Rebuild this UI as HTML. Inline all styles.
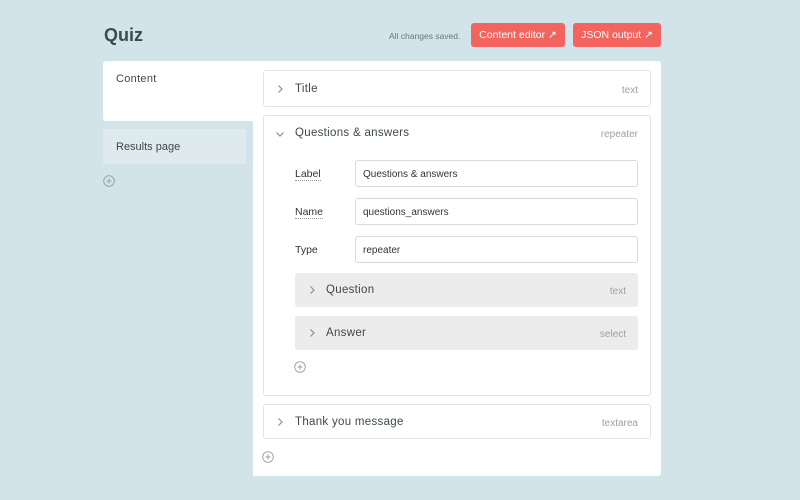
<!DOCTYPE html>
<html><head><style>
*{box-sizing:border-box;margin:0;padding:0}
body{width:800px;height:500px;background:#d2e3e9;font-family:"Liberation Sans",sans-serif;position:relative;overflow:hidden;color:#3a4548}
.a{position:absolute}
h1{position:absolute;left:104px;top:25px;font-size:18px;font-weight:bold;color:#3d4a4f}
.saved{left:389px;top:31px;font-size:8.5px;color:#6c7679}
.btn{top:23px;height:24px;background:#f4645e;color:#fff;font-size:10.5px;border-radius:3px;line-height:24px;text-align:center}
.panel{left:253px;top:61px;width:408px;height:415px;background:#fff;border-radius:0 3px 3px 0}
.card{border:1px solid #e1e4e5;border-radius:3px;background:#fff}
.hd{font-size:11.5px;color:#3d484c;letter-spacing:.3px}
.ty{font-size:10px;color:#9aa0a2;text-align:right}
.chev{width:8px;height:10px}
.lbl{font-size:10.5px;color:#333}
.inp{border:1px solid #d7dadb;border-radius:3px;height:27px;font-size:10px;line-height:27px;padding-left:7px;color:#333}
.sub{background:#ececec;border-radius:3px}
.plus{width:12px;height:12px}
</style></head><body>
<svg width="0" height="0" style="position:absolute"><defs>
<symbol id="r" viewBox="0 0 8 10"><path d="M2.5 1.5L6 5L2.5 8.5" fill="none" stroke="#8a8f91" stroke-width="1.2"/></symbol>
<symbol id="d" viewBox="0 0 10 8"><path d="M1.5 2.5L5 6L8.5 2.5" fill="none" stroke="#8a8f91" stroke-width="1.2"/></symbol>
<symbol id="p" viewBox="0 0 12 12"><circle cx="6" cy="6" r="5.3" fill="none" stroke="#9a9fa1" stroke-width="0.9"/><path d="M6 3.5V8.5M3.5 6H8.5" stroke="#9a9fa1" stroke-width="0.9"/></symbol>
</defs></svg>
<h1>Quiz</h1>
<div class="a saved">All changes saved.</div>
<div class="a btn" style="left:471px;width:94px">Content editor ↗</div>
<div class="a btn" style="left:573px;width:88px">JSON output ↗</div>
<div class="a" style="left:103px;top:61px;width:150px;height:60px;background:#fff;border-radius:3px 0 0 3px"></div>
<div class="a hd" style="left:116px;top:73px;font-size:11px">Content</div>
<div class="a" style="left:103px;top:129px;width:143px;height:35px;background:#deeaee;border-radius:2px"></div>
<div class="a" style="left:116px;top:141px;font-size:11px;color:#3d484c">Results page</div>
<svg class="a plus" style="left:103px;top:175px"><use href="#p"/></svg>
<div class="a panel"></div>
<div class="a card" style="left:263px;top:70px;width:388px;height:37px"></div>
<svg class="a chev" style="left:276px;top:84px"><use href="#r"/></svg>
<div class="a hd" style="left:295px;top:83px">Title</div>
<div class="a ty" style="left:580px;top:85px;width:58px">text</div>
<div class="a card" style="left:263px;top:115px;width:388px;height:281px"></div>
<svg class="a" style="left:275px;top:130px;width:10px;height:8px"><use href="#d"/></svg>
<div class="a hd" style="left:295px;top:127px">Questions &amp; answers</div>
<div class="a ty" style="left:580px;top:129px;width:58px">repeater</div>
<div class="a lbl" style="left:295px;top:168px;border-bottom:1px dotted #999">Label</div>
<div class="a inp" style="left:355px;top:160px;width:283px">Questions &amp; answers</div>
<div class="a lbl" style="left:295px;top:206px;border-bottom:1px dotted #999">Name</div>
<div class="a inp" style="left:355px;top:198px;width:283px">questions_answers</div>
<div class="a lbl" style="left:295px;top:244px">Type</div>
<div class="a inp" style="left:355px;top:236px;width:283px">repeater</div>
<div class="a sub" style="left:295px;top:273px;width:343px;height:34px"></div>
<svg class="a chev" style="left:308px;top:285px"><use href="#r"/></svg>
<div class="a hd" style="left:326px;top:284px">Question</div>
<div class="a ty" style="left:570px;top:286px;width:56px">text</div>
<div class="a sub" style="left:295px;top:316px;width:343px;height:34px"></div>
<svg class="a chev" style="left:308px;top:328px"><use href="#r"/></svg>
<div class="a hd" style="left:326px;top:327px">Answer</div>
<div class="a ty" style="left:570px;top:329px;width:56px">select</div>
<svg class="a plus" style="left:294px;top:361px"><use href="#p"/></svg>
<div class="a card" style="left:263px;top:404px;width:388px;height:35px"></div>
<svg class="a chev" style="left:276px;top:417px"><use href="#r"/></svg>
<div class="a hd" style="left:295px;top:416px">Thank you message</div>
<div class="a ty" style="left:580px;top:418px;width:58px">textarea</div>
<svg class="a plus" style="left:262px;top:451px"><use href="#p"/></svg>
</body></html>
